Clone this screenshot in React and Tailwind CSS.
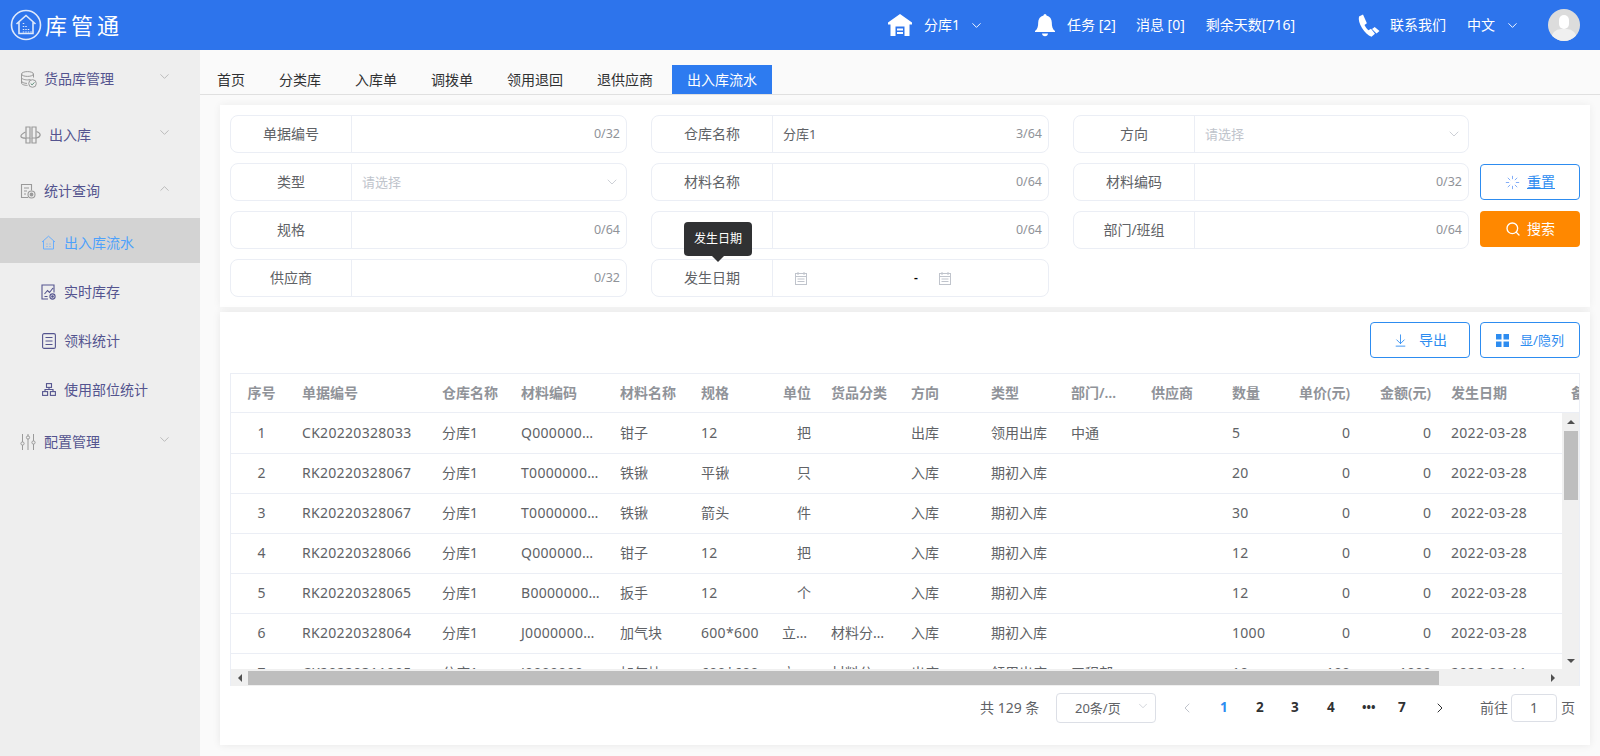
import React from "react";
import { ChevronDown, ChevronUp, ChevronLeft, ChevronRight, Search, Loader, ArrowDownToLine } from "lucide-react";

const FONT = "font-['Noto_Sans','Noto_Sans_CJK_SC',sans-serif]";

// Sidebar icons
const DbIcon = () => (
  <svg width="17" height="17" viewBox="0 0 17 17" fill="none" stroke="#9a9a9a" strokeWidth="1">
    <ellipse cx="7.5" cy="3" rx="6" ry="2.4" />
    <path d="M1.5 3v9c0 1.3 2.5 2.4 6 2.4M13.5 3v3.500M1.500 6.500c0 1.300 2.700 2.400 6 2.400 1 0 2-.1 3-.4M1.500 10c0 1.300 2.500 2.300 5.500 2.400" />
    <circle cx="12.500" cy="12.500" r="3.800" />
    <path d="M10.700 12.500l1.400 1.400 2.300-2.500" stroke="#5f8f7a" />
  </svg>
);
const InOutIcon = () => (
  <svg width="21" height="18" viewBox="0 0 21 18" fill="none" stroke="#9a9a9a" strokeWidth="1.200">
    <path d="M6 1h4v11H6zM12 1h4v11h-4z" />
    <path d="M5.500 6C2.500 7.500.6 9 1 10.500c.4 1.200 2.500 1.600 4.500 1.600M16.500 5.500c2.500 1 4 2.500 3.500 4-.4 1.400-2 2.200-4 2.500M6 12v5h4v-5M12 12v5h4v-5" />
  </svg>
);
const StatIcon = () => (
  <svg width="16" height="16" viewBox="0 0 16 16" fill="none" stroke="#9a9a9a" strokeWidth="1.100">
    <path d="M8 14.500H1.500v-13h10v6M4 5h5M4 8h3M4 11h2" />
    <circle cx="11.500" cy="11.500" r="3.500" />
    <circle cx="11.500" cy="11.500" r="1.400" fill="#9a9a9a" />
  </svg>
);
const HouseIcon = () => (
  <svg width="15" height="15" viewBox="0 0 15 15" fill="none" stroke="#6aaefc" strokeWidth="1">
    <path d="M1 7l6.500-5.800L14 7M2.500 6v8h10V6M5.500 9h1M8.500 9h1M5.500 11.500h1M8.500 11.500h1" />
  </svg>
);
const ChartIcon = () => (
  <svg width="15" height="16" viewBox="0 0 15 16" fill="none" stroke="#55558f" strokeWidth="1.100">
    <path d="M7 15H1V1h12v7.500M3.500 10l3-3.500 2 2L12 4M3.500 12.500h3" />
    <circle cx="11.500" cy="12.500" r="2.600" />
    <circle cx="11.500" cy="12.500" r=".8" fill="#55558f" />
  </svg>
);
const ListIcon = () => (
  <svg width="14" height="16" viewBox="0 0 14 16" fill="none" stroke="#55558f" strokeWidth="1.100">
    <rect x=".6" y=".6" width="12.800" height="14.800" rx="1.500" />
    <path d="M3.500 4.500h7M3.500 8h7M3.500 11.500h7" />
  </svg>
);
const OrgIcon = () => (
  <svg width="14" height="13" viewBox="0 0 14 13" fill="none" stroke="#55558f" strokeWidth="1.100">
    <rect x="4.500" y=".6" width="5" height="3.800" />
    <rect x=".6" y="8.600" width="5" height="3.800" />
    <rect x="8.400" y="8.600" width="5" height="3.800" />
    <path d="M7 4.500v2H3v2M7 6.500h4v2" />
  </svg>
);
const SlidersIcon = () => (
  <svg width="16" height="18" viewBox="0 0 16 18" fill="none" stroke="#9a9a9a" strokeWidth="1">
    <path d="M2.500 1v8M2.500 12v5M8 1v2M8 6v11M13.500 1v7M13.500 11v6" />
    <circle cx="2.500" cy="10.500" r="1.600" />
    <circle cx="8" cy="4.500" r="1.600" />
    <circle cx="13.500" cy="9.500" r="1.600" />
  </svg>
);

const CalIcon = () => (
  <svg width="12" height="13" viewBox="0 0 12 13" fill="none" stroke="#c0c4cc" strokeWidth="1">
    <rect x=".5" y="1.500" width="11" height="11" />
    <path d="M.5 4.500h11M3 0v3M9 0v3M2.500 7h7M2.500 9.500h7" />
  </svg>
);

const GridIcon = () => (
  <svg width="13" height="13" viewBox="0 0 13 13" fill="#2d8cf0">
    <rect width="5.500" height="5.500" />
    <rect x="7.500" width="5.500" height="5.500" />
    <rect y="7.500" width="5.500" height="5.500" />
    <rect x="7.500" y="7.500" width="5.500" height="5.500" />
  </svg>
);

const Triangle = ({ points }) => (
  <svg width="8" height="8" viewBox="0 0 8 8" fill="#505050">
    <polygon points={points} />
  </svg>
);

const Caret = () => (
  <div className="h-0 w-0 border-x-[6px] border-t-[6px] border-x-transparent border-t-[#303133]" />
);

const Logo = () => (
  <svg width="32" height="32" viewBox="0 0 32 32" fill="none" stroke="#dfe9fb">
    <circle cx="16" cy="16" r="14.500" strokeWidth="1.600" />
    <path d="M6.500 15L16 6.500 25.500 15M9 13v11.500h14V13" strokeWidth="1.600" />
    <path d="M13.500 14v1M13.500 17v1M13.500 20v1M13.500 22.500v1M16 17v1M16 20v1M16 22.500v1M18.500 20v1M18.500 22.500v1M21 22.500v1" strokeWidth="1.500" />
  </svg>
);
const WarehouseIcon = () => (
  <svg width="24" height="24" viewBox="0 0 24 24" fill="#fff">
    <path d="M12 1L0 9.500v2h2.500V23h5V13.500h9V23h5V11.500H24v-2z" />
    <path d="M9 15.500h6v2H9zM9 19h6v2H9z" />
  </svg>
);
const BellIcon = () => (
  <svg width="20" height="24" viewBox="0 0 20 24" fill="#fff">
    <path d="M10 1a1.500 1.500 0 0 1 1.500 1.500C15 3.300 16.800 6.200 16.800 9.500c0 4 .7 6.500 3.200 8.500v1H0v-1c2.500-2 3.200-4.500 3.200-8.500C3.200 6.200 5 3.300 8.500 2.500A1.500 1.500 0 0 1 10 1z" />
    <path d="M7 20.500h6c0 1.600-1.300 2.700-3 2.700s-3-1.100-3-2.700z" />
  </svg>
);
const PhoneIcon = () => (
  <svg width="24" height="25" viewBox="0 0 24 25" fill="#fff">
    <path d="M6 1.500L2 3.500c-.7 3 .3 7 3 11.500s6 7.500 9.500 8.800l3.500-3-4-5-2.500 1.500c-1.500-1-3-3.200-4-5.300l2.400-1.800zM15 16l4.500 4.500 3-2.500-4.800-4z" />
  </svg>
);
const Avatar = () => (
  <div className="relative h-8 w-8 overflow-hidden rounded-full bg-[#dcdcdc]">
    <div className="absolute left-[11px] top-[6px] h-[14px] w-[10px] rounded-full bg-white" />
    <div className="absolute left-[3px] top-[20px] h-[20px] w-[26px] rounded-full bg-[#f0f0f0]" />
  </div>
);

const SideMain = ({ icon, label, open, textClass = "ml-2" }) => (
  <div className="flex h-14 items-center pl-5 text-sm text-[#54548f]">
    <span className="block w-4">{icon}</span>
    <span className={textClass}>{label}</span>
    <span className="ml-auto mr-[28px] -mt-1.5 text-[#aaaaaa]">
      {open ? <ChevronUp size={15} strokeWidth={1.200} /> : <ChevronDown size={15} strokeWidth={1.200} />}
    </span>
  </div>
);

const SideSub = ({ icon, label, active }) => (
  <div className={`mb-1 flex h-[45px] items-center pl-[41px] pt-1 text-sm ${active ? "bg-[#d3d3d3] text-[#4ea1fb]" : "text-[#54548f]"}`}>
    <span className="flex w-[15px] justify-center">{icon}</span>
    <span className="ml-2">{label}</span>
  </div>
);

const Field = ({ label, children, tip }) => (
  <div className="flex h-[38px] rounded-lg border border-[#ebeef5] text-sm text-[#606266]">
    <div className="relative flex w-[121px] shrink-0 items-center justify-center border-r border-[#ebeef5]">
      {tip && (
        <div className="absolute left-[32px] top-[-38px] flex flex-col items-center">
          <div className="flex h-[34px] w-[68px] items-center justify-center rounded bg-[#303133] text-xs text-white">{tip}</div>
          <Caret />
        </div>
      )}
      {label}
    </div>
    <div className="flex min-w-0 flex-1 items-center px-[10px]">{children}</div>
  </div>
);

const Count = ({ v }) => <span className="ml-auto mr-[-4px] text-[12.500px] text-[#909399]">{v}</span>;

const Select = () => (
  <>
    <span className="text-[13px] text-[#c0c4cc]">请选择</span>
    <ChevronDown size={16} strokeWidth={1.200} className="ml-auto mr-[-4px] text-[#c0c4cc]" />
  </>
);

const LATIN = "tracking-[0.3px]";

const cols = [
  { label: "序号", width: "w-[61px]", align: "text-center" },
  { label: "单据编号", width: "w-[140px]", align: "text-left", cell: LATIN },
  { label: "仓库名称", width: "w-[79px]", align: "text-left" },
  { label: "材料编码", width: "w-[99px]", align: "text-left", cell: LATIN },
  { label: "材料名称", width: "w-[81px]", align: "text-left" },
  { label: "规格", width: "w-[81px]", align: "text-left", cell: LATIN },
  { label: "单位", width: "w-[49px]", align: "text-right" },
  { label: "货品分类", width: "w-[80px]", align: "text-left" },
  { label: "方向", width: "w-[80px]", align: "text-left" },
  { label: "类型", width: "w-[80px]", align: "text-left" },
  { label: "部门/班组", width: "w-[80px]", align: "text-left", head: "pr-[17px]" },
  { label: "供应商", width: "w-[81px]", align: "text-left" },
  { label: "数量", width: "w-[60px]", align: "text-left", cell: LATIN },
  { label: "单价(元)", width: "w-[78px]", align: "text-right" },
  { label: "金额(元)", width: "w-[81px]", align: "text-right" },
  { label: "发生日期", width: "w-[120px]", align: "text-left", cell: LATIN },
  { label: "备注", width: "w-[80px]", align: "text-left" },
];

const rows = [
  ["1", "CK20220328033", "分库1", "Q0000000001", "钳子", "12", "把", "", "出库", "领用出库", "中通", "", "5", "0", "0", "2022-03-28", ""],
  ["2", "RK20220328067", "分库1", "T0000000002", "铁锹", "平锹", "只", "", "入库", "期初入库", "", "", "20", "0", "0", "2022-03-28", ""],
  ["3", "RK20220328067", "分库1", "T0000000003", "铁锹", "箭头", "件", "", "入库", "期初入库", "", "", "30", "0", "0", "2022-03-28", ""],
  ["4", "RK20220328066", "分库1", "Q0000000001", "钳子", "12", "把", "", "入库", "期初入库", "", "", "12", "0", "0", "2022-03-28", ""],
  ["5", "RK20220328065", "分库1", "B0000000004", "扳手", "12", "个", "", "入库", "期初入库", "", "", "12", "0", "0", "2022-03-28", ""],
  ["6", "RK20220328064", "分库1", "J0000000005", "加气块", "600*600", "立方米", "材料分类1", "入库", "期初入库", "", "", "1000", "0", "0", "2022-03-28", ""],
  ["7", "CK20220311005", "分库1", "J0000000005", "加气块", "600*600", "立方米", "材料分类1", "出库", "领用出库", "工程部", "", "10", "100", "1000", "2022-03-11", ""],
];

const DataTable = () => (
  <div className="ml-[10px] mr-[10px] mt-[15px] border-l border-t border-r border-[#ebeef5]">
    <div className="h-[39px] overflow-hidden border-b border-[#ebeef5]">
      <table className="w-[1410px] table-fixed border-collapse text-sm">
        <colgroup>{cols.map((c) => <col key={c.label} className={c.width} />)}</colgroup>
        <thead>
          <tr className="h-[38px]">
            {cols.map((c) => (
              <th key={c.label} className={`truncate px-[10px] font-semibold text-[#909399] ${c.align} ${c.head || ""}`}>{c.label}</th>
            ))}
          </tr>
        </thead>
      </table>
    </div>
    <div className="flex h-[256px]">
      <div className="min-w-0 flex-1 overflow-hidden">
        <table className="w-[1410px] table-fixed border-collapse text-sm text-[#606266]">
          <colgroup>{cols.map((c) => <col key={c.label} className={c.width} />)}</colgroup>
          <tbody>
            {rows.map((r) => (
              <tr key={r[0]} className="h-10 border-b border-[#ebeef5]">
                {r.map((v, i) => (
                  <td key={i} className={`truncate px-[10px] ${cols[i].align} ${cols[i].cell || ""}`}>{v}</td>
                ))}
              </tr>
            ))}
          </tbody>
        </table>
      </div>
      {/* fake vertical scrollbar */}
      <div className="flex w-[17px] shrink-0 flex-col items-center bg-[#f0f0f0]">
        <div className="flex h-[17px] items-center justify-center"><Triangle points="4,2 8,6 0,6" /></div>
        <div className="mt-px h-[69px] w-[14px] bg-[#bebebe]" />
        <div className="mt-auto flex h-[17px] items-center justify-center"><Triangle points="0,2 8,2 4,6" /></div>
      </div>
    </div>
    {/* fake horizontal scrollbar */}
    <div className="flex h-[17px] items-center bg-[#f0f0f0]">
      <div className="flex w-[17px] justify-center"><Triangle points="6,0 6,8 2,4" /></div>
      <div className="h-[14px] w-[1191px] bg-[#bebebe]" />
      <div className="ml-auto mr-[18px] flex w-[17px] justify-center"><Triangle points="2,0 2,8 6,4" /></div>
    </div>
  </div>
);

const Pager = () => (
  <div className="ml-[760px] mt-[7px] flex h-[30px] items-center text-sm text-[#606266]">
    <span className="w-[76px]">共 129 条</span>
    <div className="flex h-[30px] w-[100px] items-center rounded border border-[#dcdfe6] pl-[18px] pr-[5px] text-[13px]">
      20条/页
      <ChevronDown size={14} strokeWidth={1.200} className="ml-auto -mt-1 text-[#c0c4cc]" />
    </div>
    <ChevronLeft size={16} strokeWidth={1.500} className="ml-[23px] text-[#c0c4cc]" />
    <div className="ml-[25px] flex items-center text-[13.500px] font-bold text-[#303133]">
      <span className="w-[36px] text-[#2d8cf0]">1</span>
      <span className="w-[35px]">2</span>
      <span className="w-[36px]">3</span>
      <span className="w-[35px]">4</span>
      <span className="w-[36px] text-[12px]">•••</span>
      <span className="w-[34px]">7</span>
    </div>
    <ChevronRight size={16} strokeWidth={1.500} className="text-[#303133]" />
    <span className="ml-[32px]">前往</span>
    <div className="ml-[3px] flex h-[28px] w-[46px] items-center justify-center rounded border border-[#dcdfe6]">1</div>
    <span className="ml-1">页</span>
  </div>
);

export default function App() {
  return (
    <div className={`flex h-[756px] w-[1600px] flex-col overflow-hidden bg-[#fafafa] ${FONT}`}>
      {/* top bar */}
      <header className="flex h-[50px] shrink-0 items-center bg-[#2d74ec] text-sm text-white">
        <div className="ml-[10px]"><Logo /></div>
        <span className="ml-[3px] text-[22px] leading-none tracking-[4px]">库管通</span>
        <div className="ml-[765px]"><WarehouseIcon /></div>
        <span className="ml-3">分库1</span>
        <ChevronDown size={15} strokeWidth={1.500} className="ml-[9px]" />
        <div className="ml-[51px]"><BellIcon /></div>
        <span className="ml-3">任务 [2]</span>
        <span className="ml-5">消息 [0]</span>
        <span className="ml-[21px]">剩余天数[716]</span>
        <div className="ml-[62px]"><PhoneIcon /></div>
        <span className="ml-[9px]">联系我们</span>
        <span className="ml-[21px]">中文</span>
        <ChevronDown size={15} strokeWidth={1.500} className="ml-[10px]" />
        <div className="ml-[28px]"><Avatar /></div>
      </header>

      <div className="flex min-h-0 flex-1">
        {/* sidebar */}
        <aside className="w-[200px] shrink-0 bg-[#eeeeee] pt-px">
          <SideMain icon={<DbIcon />} label="货品库管理" />
          <SideMain icon={<InOutIcon />} label="出入库" textClass="ml-[13px]" />
          <SideMain icon={<StatIcon />} label="统计查询" open />
          <div className="-mt-px">
            <SideSub icon={<HouseIcon />} label="出入库流水" active />
            <SideSub icon={<ChartIcon />} label="实时库存" />
            <SideSub icon={<ListIcon />} label="领料统计" />
            <SideSub icon={<OrgIcon />} label="使用部位统计" />
          </div>
          <div className="mt-[3px]">
            <SideMain icon={<SlidersIcon />} label="配置管理" />
          </div>
        </aside>

        <main className="min-w-0 flex-1">
          {/* tabs */}
          <div className="flex h-[45px] items-end border-b border-[#e0e0e0] text-sm text-[#303133]">
            {["首页", "分类库", "入库单", "调拨单", "领用退回", "退供应商"].map((t) => (
              <div key={t} className="flex h-[29px] items-center px-[17px]">{t}</div>
            ))}
            <div className="ml-[2px] flex h-[29px] items-center bg-[#2d7bf0] px-[15px] text-white">出入库流水</div>
          </div>

          {/* filter form */}
          <section className="ml-5 mr-[10px] mt-[10px] flex h-[202px] bg-white p-[10px] shadow-[0_0_8px_rgba(0,0,0,0.06)]">
            <div className="grid w-[1239px] grid-cols-[397px_398px_396px] gap-x-[24px] gap-y-[10px]">
              <Field label="单据编号"><Count v="0/32" /></Field>
              <Field label="仓库名称"><span className="text-[13px]">分库1</span><Count v="3/64" /></Field>
              <Field label="方向"><Select /></Field>
              <Field label="类型"><Select /></Field>
              <Field label="材料名称"><Count v="0/64" /></Field>
              <Field label="材料编码"><Count v="0/32" /></Field>
              <Field label="规格"><Count v="0/64" /></Field>
              <Field label=""><Count v="0/64" /></Field>
              <Field label="部门/班组"><Count v="0/64" /></Field>
              <Field label="供应商"><Count v="0/32" /></Field>
              <Field label="发生日期" tip="发生日期">
                <div className="ml-[12px] flex items-center text-black">
                  <CalIcon />
                  <span className="ml-[107px] text-xs font-semibold">-</span>
                  <span className="ml-[21px]"><CalIcon /></span>
                </div>
              </Field>
            </div>
            <div className="ml-[11px] flex w-[100px] flex-col gap-[11px] pt-[49px] text-sm">
              <button className="flex h-9 items-center justify-center gap-[7px] rounded border border-[#2d8cf0] text-[#2d8cf0]">
                <Loader size={15} strokeWidth={1.500} className="text-[#7aa8f8]" />
                <span className="underline">重置</span>
              </button>
              <button className="flex h-9 items-center justify-center gap-[6px] rounded bg-[#ff8800] text-white">
                <Search size={16} strokeWidth={2} />
                <span>搜索</span>
              </button>
            </div>
          </section>

          {/* results */}
          <section className="ml-5 mr-[10px] mt-[5px] h-[433px] bg-white shadow-[0_0_8px_rgba(0,0,0,0.08)]">
            <div className="flex justify-end gap-[10px] pr-[10px] pt-[10px] text-sm text-[#2d8cf0]">
              <button className="flex h-9 w-[100px] items-center justify-center gap-[11px] rounded border border-[#2d8cf0]">
                <ArrowDownToLine size={15} strokeWidth={1.400} />
                <span>导出</span>
              </button>
              <button className="flex h-9 w-[100px] items-center justify-center gap-[11px] rounded border border-[#2d8cf0]">
                <GridIcon />
                <span className="text-[13px]">显/隐列</span>
              </button>
            </div>
            <DataTable />
            <Pager />
          </section>
        </main>
      </div>
    </div>
  );
}
